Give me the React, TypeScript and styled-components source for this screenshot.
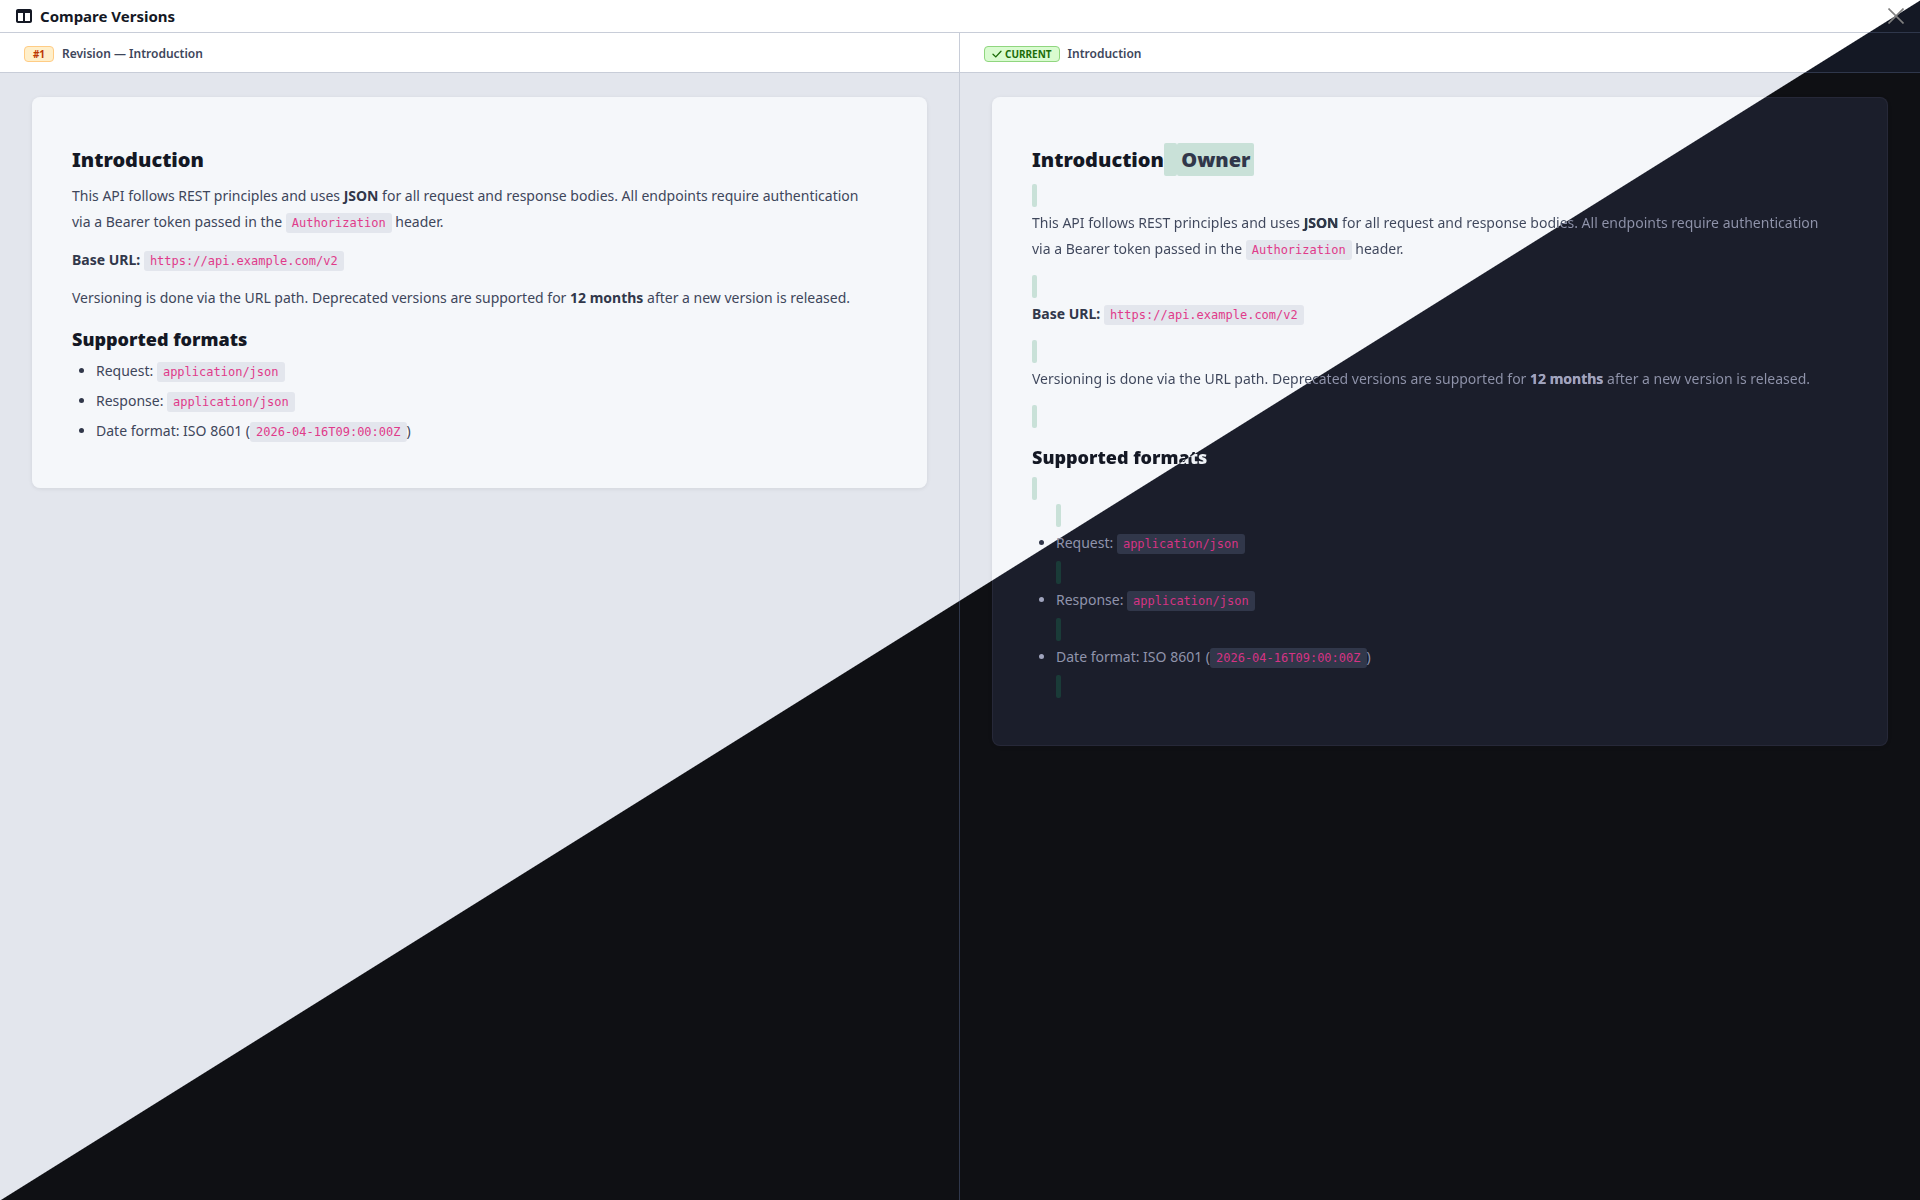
import React from "react";
import styled, { createGlobalStyle, css } from "styled-components";
import { FaTableColumns } from "react-icons/fa6";

type Tone = "light" | "dark" | "split";

/* The window is divided from the top right to the bottom left corner:
   the light theme lies above the diagonal, the dark theme below it. */
const split = (light: string, dark: string) =>
  `linear-gradient(to bottom right, ${light} 50%, ${dark} calc(50% + 1px)) fixed`;

const sans = `"Noto Sans", "Open Sans", sans-serif`;
const mono = `"DejaVu Sans Mono", "Liberation Mono", monospace`;

const textTone = (light: string, dark: string) => css<{ $tone?: Tone }>`
  color: ${(p) => (p.$tone === "dark" ? dark : light)};
  ${(p) =>
    p.$tone === "split" &&
    css`
      background: ${split(light, dark)};
      -webkit-background-clip: text;
      background-clip: text;
      -webkit-text-fill-color: transparent;
    `}
`;

const GlobalStyle = createGlobalStyle`
  *, *::before, *::after { box-sizing: border-box; }
  body { margin: 0; font-family: ${sans}; }
`;

const Screen = styled.div`
  display: flex;
  flex-direction: column;
  gap: 1px;
  min-height: 100vh;
  background: ${split("#c8cdd8", "#2f374b")};
`;

const TopBar = styled.header`
  display: flex;
  align-items: center;
  gap: 8px;
  height: 32px;
  padding: 0 16px;
  background: ${split("#ffffff", "#141824")};
  color: #141824;
`;

const Title = styled.h1`
  flex: 1;
  margin: 0;
  font-size: 15px;
  line-height: 24px;
  font-weight: 700;
`;

const CloseButton = styled.button`
  display: flex;
  padding: 0;
  border: 0;
  background: none;
  color: #808080;
  cursor: pointer;
`;

const Columns = styled.main`
  flex: 1;
  display: grid;
  grid-template-columns: minmax(0, 959fr) minmax(0, 960fr);
  gap: 1px;
`;

const Column = styled.section`
  display: flex;
  flex-direction: column;
  gap: 1px;
`;

const ColumnHeader = styled.div`
  display: flex;
  align-items: center;
  gap: 8px;
  height: 39px;
  padding: 3px 24px 0;
  background: ${split("#ffffff", "#141824")};
`;

const ColumnTitle = styled.h2`
  margin: 0;
  font-size: 12px;
  line-height: 18px;
  font-weight: 600;
  color: #3e465b;
`;

const Badge = styled.span<{ $kind: "revision" | "current" }>`
  display: inline-flex;
  align-items: center;
  justify-content: center;
  gap: 3px;
  min-width: 30px;
  padding: 0 7px;
  border: 1px solid ${(p) => (p.$kind === "current" ? "#90d67f" : "#ffcc85")};
  border-radius: 4px;
  background: ${(p) => (p.$kind === "current" ? "#d9fbd0" : "#ffefca")};
  color: ${(p) => (p.$kind === "current" ? "#1c6c09" : "#bc3803")};
  font-size: 10px;
  line-height: 14px;
  font-weight: 700;
`;

const Body = styled.div`
  flex: 1;
  padding: 24px 32px;
  background: ${split("#e3e6ed", "#0f1014")};
`;

const Card = styled.article`
  padding: 39px;
  border: 1px solid transparent;
  border-radius: 8px;
  background:
    ${split("#f5f7fa", "#1b1e2b")} padding-box,
    ${split("#f5f7fa", "#262838")} border-box;
  box-shadow: 0 1px 4px rgba(0, 0, 0, 0.08);
`;

const Heading = styled.h1`
  margin: 3px 0;
  font-size: 20px;
  line-height: 40px;
  font-weight: 900;
  color: #141824;
`;

const SubHeading = styled.h2<{ $tone?: Tone }>`
  margin: 10px 0 3px;
  font-size: 18px;
  line-height: 32px;
  font-weight: 900;
  ${textTone("#141824", "#eff2f6")}
`;

const Paragraph = styled.p<{ $tone?: Tone }>`
  margin: 0 0 12px;
  padding-right: 16px;
  font-size: 14px;
  line-height: 26px;
  ${textTone("#3e465b", "#9094ab")}
`;

const Strong = styled.strong<{ $tone?: Tone }>`
  font-weight: 700;
  ${textTone("#31374a", "#a0a4bd")}
  -webkit-text-fill-color: currentcolor;
`;

const Code = styled.code<{ $tone?: Tone }>`
  padding: 3px 6px;
  border-radius: 3px;
  background: ${(p) => (p.$tone === "dark" ? "#31374a" : "#e3e6ed")};
  color: ${(p) => (p.$tone === "dark" ? "#d63384" : "#e03a8a")};
  -webkit-text-fill-color: currentcolor;
  font-family: ${mono};
  font-size: 12px;
  line-height: 13px;
`;

const List = styled.ul`
  margin: 0;
  padding: 0 0 0 24px;
`;

const Item = styled.li<{ $tone?: Tone; $bullet?: Tone }>`
  margin-bottom: 4px;
  font-size: 14px;
  line-height: 26px;
  color: ${(p) => (p.$tone === "dark" ? "#9094ab" : "#3e465b")};
  &::marker {
    color: ${(p) => (p.$bullet === "dark" ? "#a0a4bd" : "#31374a")};
  }
`;

const InsertedItem = styled.li`
  list-style: none;
  &:last-child { margin-bottom: 5px; }
`;

const InsertedText = styled.ins`
  padding: 3px 4px;
  border-radius: 2px;
  background: #c9e1d8;
  color: #31374a;
  text-decoration: none;
`;

const InsertedBreak = styled.ins<{ $tone?: Tone }>`
  display: block;
  width: 5px;
  height: 23px;
  border-radius: 2px;
  background: ${(p) => (p.$tone === "dark" ? "#1a3b38" : "#c9e1d8")};
`;

const BreakRow = styled.div`
  padding: 1px 0 3px;
`;

const Break = ({ tone }: { tone?: Tone }) => (
  <BreakRow>
    <InsertedBreak $tone={tone} />
  </BreakRow>
);

const CheckIcon = () => (
  <svg width="10" height="10" viewBox="0 0 10 10" fill="none" stroke="currentColor" strokeWidth="1.3" strokeLinecap="round" aria-hidden="true">
    <path d="M1 5.2 3.8 7.9 9 2.2" />
  </svg>
);

const CloseIcon = () => (
  <svg width="16" height="16" viewBox="0 0 16 16" fill="none" stroke="currentColor" strokeWidth="1.6" aria-hidden="true">
    <path d="M0.5 0.5 15.5 15.5M15.5 0.5 0.5 15.5" />
  </svg>
);

export default function App() {
  return (
    <>
      <GlobalStyle />
      <Screen>
        <TopBar>
          <FaTableColumns size={16} aria-hidden="true" />
          <Title>Compare Versions</Title>
          <CloseButton type="button" aria-label="Close">
            <CloseIcon />
          </CloseButton>
        </TopBar>
        <Columns>
          <Column>
            <ColumnHeader>
              <Badge $kind="revision">#1</Badge>
              <ColumnTitle>Revision — Introduction</ColumnTitle>
            </ColumnHeader>
            <Body>
              <Card>
                <Heading>Introduction</Heading>
                <Paragraph>
                  This API follows REST principles and uses <Strong>JSON</Strong> for all request and
                  response bodies. All endpoints require authentication via a Bearer token passed in
                  the <Code>Authorization</Code> header.
                </Paragraph>
                <Paragraph>
                  <Strong>Base URL:</Strong> <Code>https://api.example.com/v2</Code>
                </Paragraph>
                <Paragraph>
                  Versioning is done via the URL path. Deprecated versions are supported for{" "}
                  <Strong>12 months</Strong> after a new version is released.
                </Paragraph>
                <SubHeading>Supported formats</SubHeading>
                <List>
                  <Item>Request: <Code>application/json</Code></Item>
                  <Item>Response: <Code>application/json</Code></Item>
                  <Item>Date format: ISO 8601 (<Code>2026-04-16T09:00:00Z</Code>)</Item>
                </List>
              </Card>
            </Body>
          </Column>
          <Column>
            <ColumnHeader>
              <Badge $kind="current">
                <CheckIcon />
                CURRENT
              </Badge>
              <ColumnTitle>Introduction</ColumnTitle>
            </ColumnHeader>
            <Body>
              <Card>
                <Heading>
                  Introduction<InsertedText> </InsertedText>
                  <InsertedText>Owner</InsertedText>
                </Heading>
                <Break />
                <Paragraph $tone="split">
                  This API follows REST principles and uses <Strong>JSON</Strong> for all request and
                  response bodies. All endpoints require authentication via a Bearer token passed in
                  the <Code>Authorization</Code> header.
                </Paragraph>
                <Break />
                <Paragraph>
                  <Strong>Base URL:</Strong> <Code>https://api.example.com/v2</Code>
                </Paragraph>
                <Break />
                <Paragraph $tone="split">
                  Versioning is done via the URL path. Deprecated versions are supported for{" "}
                  <Strong $tone="dark">12 months</Strong> after a new version is released.
                </Paragraph>
                <Break />
                <SubHeading $tone="split">Supported formats</SubHeading>
                <Break />
                <List>
                  <InsertedItem><Break /></InsertedItem>
                  <Item $tone="dark" $bullet="light">Request: <Code $tone="dark">application/json</Code></Item>
                  <InsertedItem><Break tone="dark" /></InsertedItem>
                  <Item $tone="dark" $bullet="dark">Response: <Code $tone="dark">application/json</Code></Item>
                  <InsertedItem><Break tone="dark" /></InsertedItem>
                  <Item $tone="dark" $bullet="dark">
                    Date format: ISO 8601 (<Code $tone="dark">2026-04-16T09:00:00Z</Code>)
                  </Item>
                  <InsertedItem><Break tone="dark" /></InsertedItem>
                </List>
              </Card>
            </Body>
          </Column>
        </Columns>
      </Screen>
    </>
  );
}
